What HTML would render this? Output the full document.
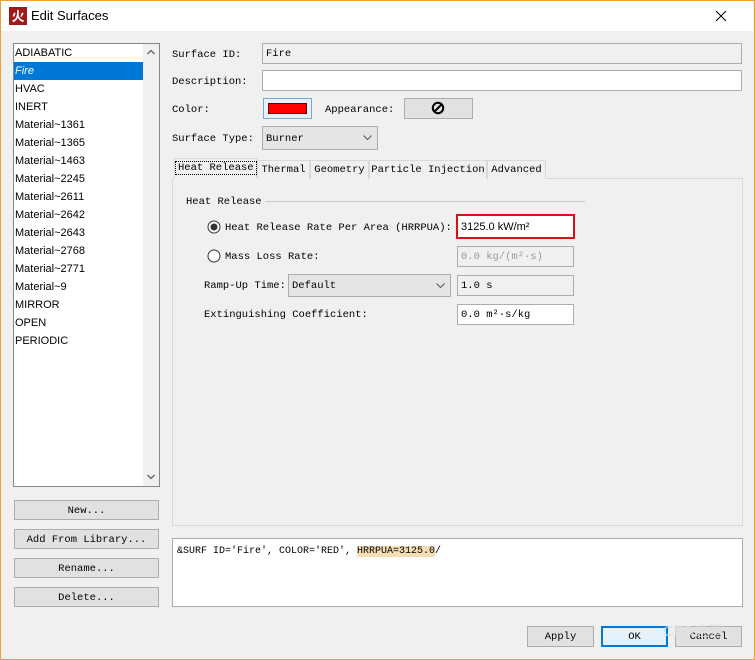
<!DOCTYPE html>
<html><head><meta charset="utf-8"><style>
*{box-sizing:border-box;margin:0;padding:0}
body{width:755px;height:660px;background:#f0f0f0;position:relative;overflow:hidden;font-family:"Liberation Mono","Noto Serif CJK SC",monospace;font-size:10.5px;color:#000}
.a{position:absolute}
.win{left:0;top:0;width:755px;height:660px;border:1px solid #f0a030}
.title{left:1px;top:1px;width:752px;height:30px;background:#fff}
.fld{position:absolute;border:1px solid #adadad;background:#fff;padding-left:3px;line-height:21px;white-space:nowrap}
.btn{position:absolute;border:1px solid #adadad;background:#e1e1e1;text-align:center;line-height:20px;white-space:nowrap}
.lbl{position:absolute;white-space:nowrap;line-height:14px}
.list{left:13px;top:43px;width:147px;height:444px;border:1px solid #828790;background:#fff;font-family:"Liberation Sans",sans-serif;font-size:11px}
.list div{height:18px;line-height:18px;padding-left:1px;width:129px}
.tab{position:absolute;top:160px;height:19px;border:1px solid #d9d9d9;border-bottom:none;background:#f0f0f0;line-height:18px;text-align:center;white-space:nowrap}
</style></head><body>
<div class="a win"></div>
<div class="a title"></div>
<div class="a" style="left:9px;top:7px;width:18px;height:18px;background:#a01818;color:#fff;font:bold 13px 'Noto Sans CJK SC',sans-serif;text-align:center;line-height:18px">火</div>
<div class="a" style="left:31px;top:8px;font:13px 'Liberation Sans',sans-serif">Edit Surfaces</div>
<svg class="a" style="left:715px;top:10px" width="12" height="12"><path d="M1 1L11 11M11 1L1 11" stroke="#000" stroke-width="1"/></svg>

<div class="a list">
<div>ADIABATIC</div><div style="background:#0078d7;color:#fff;font-style:italic">Fire</div><div>HVAC</div><div>INERT</div><div>Material~1361</div><div>Material~1365</div><div>Material~1463</div><div>Material~2245</div><div>Material~2611</div><div>Material~2642</div><div>Material~2643</div><div>Material~2768</div><div>Material~2771</div><div>Material~9</div><div>MIRROR</div><div>OPEN</div><div>PERIODIC</div>
<div class="a" style="left:129px;top:0;width:16px;height:442px;background:#f0f0f0;padding:0"></div>
<svg class="a" style="left:133px;top:5px" width="8" height="6"><path d="M0.5 5L4 1.5L7.5 5" fill="none" stroke="#606060" stroke-width="1.3"/></svg>
<svg class="a" style="left:133px;top:430px" width="8" height="6"><path d="M0.5 1L4 4.5L7.5 1" fill="none" stroke="#606060" stroke-width="1.3"/></svg>
</div>
<div class="btn" style="left:14px;top:500px;width:145px;height:20px">New...</div>
<div class="btn" style="left:14px;top:529px;width:145px;height:20px">Add From Library...</div>
<div class="btn" style="left:14px;top:558px;width:145px;height:20px">Rename...</div>
<div class="btn" style="left:14px;top:587px;width:145px;height:20px">Delete...</div>

<div class="lbl" style="left:172px;top:48px">Surface ID:</div>
<div class="fld" style="left:262px;top:43px;width:480px;height:21px;background:#f0f0f0">Fire</div>
<div class="lbl" style="left:172px;top:75px">Description:</div>
<div class="fld" style="left:262px;top:70px;width:480px;height:21px"></div>
<div class="lbl" style="left:172px;top:103px">Color:</div>
<div class="a" style="left:263px;top:98px;width:49px;height:21px;border:1px solid #7aa7d6;background:#e5f1fb"></div>
<div class="a" style="left:268px;top:103px;width:39px;height:11px;background:#f00;border:1px solid #600"></div>
<div class="lbl" style="left:325px;top:103px">Appearance:</div>
<div class="btn" style="left:404px;top:98px;width:69px;height:21px"></div>
<svg class="a" style="left:431px;top:101px" width="14" height="14"><circle cx="7" cy="7" r="5.2" fill="none" stroke="#000" stroke-width="2"/><path d="M3.5 10.5L10.5 3.5" stroke="#000" stroke-width="2"/></svg>
<div class="lbl" style="left:172px;top:132px">Surface Type:</div>
<div class="fld" style="left:262px;top:126px;width:116px;height:24px;background:#e5e5e5;line-height:24px">Burner</div>
<svg class="a" style="left:363px;top:135px" width="9" height="6"><path d="M0.5 0.5L4.5 4.5L8.5 0.5" fill="none" stroke="#555"/></svg>

<div class="a" style="left:172px;top:178px;width:571px;height:348px;border:1px solid #d9d9d9;background:#f0f0f0"></div>
<div class="tab" style="left:174px;top:158px;width:83px;height:21px;background:#f0f0f0;border-bottom:1px solid #f0f0f0"><span style="border:1px dotted #000;padding:0 2px">Heat Release</span></div>
<div class="tab" style="left:257px;width:53px">Thermal</div>
<div class="tab" style="left:310px;width:59px">Geometry</div>
<div class="tab" style="left:369px;width:118px">Particle Injection</div>
<div class="tab" style="left:487px;width:59px">Advanced</div>

<div class="lbl" style="left:186px;top:195px">Heat Release</div>
<div class="a" style="left:265px;top:201px;width:320px;height:1px;background:#c8c8c8"></div>
<svg class="a" style="left:207px;top:220px" width="14" height="14"><circle cx="7" cy="7" r="6" fill="#fff" stroke="#333"/><circle cx="7" cy="7" r="3.5" fill="#333"/></svg>
<div class="lbl" style="left:225px;top:221px">Heat Release Rate Per Area (HRRPUA):</div>
<div class="fld" style="left:456px;top:214px;width:119px;height:25px;border:2px solid #d9101a;line-height:22px;font-family:'Liberation Sans',sans-serif;font-size:11px">3125.0 kW/m²</div>
<svg class="a" style="left:207px;top:249px" width="14" height="14"><circle cx="7" cy="7" r="6" fill="#fff" stroke="#333"/></svg>
<div class="lbl" style="left:225px;top:250px">Mass Loss Rate:</div>
<div class="fld" style="left:457px;top:246px;width:117px;height:21px;background:#f0f0f0;color:#999">0.0 kg/(m²·s)</div>
<div class="lbl" style="left:204px;top:279px">Ramp-Up Time:</div>
<div class="fld" style="left:288px;top:274px;width:163px;height:23px;background:#e5e5e5;line-height:22px">Default</div>
<svg class="a" style="left:436px;top:283px" width="9" height="6"><path d="M0.5 0.5L4.5 4.5L8.5 0.5" fill="none" stroke="#555"/></svg>
<div class="fld" style="left:457px;top:275px;width:117px;height:21px;background:#f0f0f0">1.0 s</div>
<div class="lbl" style="left:204px;top:308px">Extinguishing Coefficient:</div>
<div class="fld" style="left:457px;top:304px;width:117px;height:21px">0.0 m²·s/kg</div>

<div class="a" style="left:172px;top:538px;width:571px;height:69px;border:1px solid #adadad;background:#fff"></div>
<div class="lbl" style="left:177px;top:545px;font-size:10px">&amp;SURF ID='Fire', COLOR='RED', <span style="background:#f5deb3">HRRPUA=3125.0</span>/</div>

<div class="btn" style="left:527px;top:626px;width:67px;height:21px">Apply</div>
<div class="btn" style="left:601px;top:626px;width:67px;height:21px;border:2px solid #0078d7;background:#e5f1fb;line-height:18px">OK</div>
<div class="btn" style="left:675px;top:626px;width:67px;height:21px">Cancel</div>
<div class="lbl" style="left:663px;top:620px;color:#ddd;font:15px 'Liberation Sans','Noto Sans CJK SC',sans-serif;opacity:.8">CFD之道</div>
</body></html>
